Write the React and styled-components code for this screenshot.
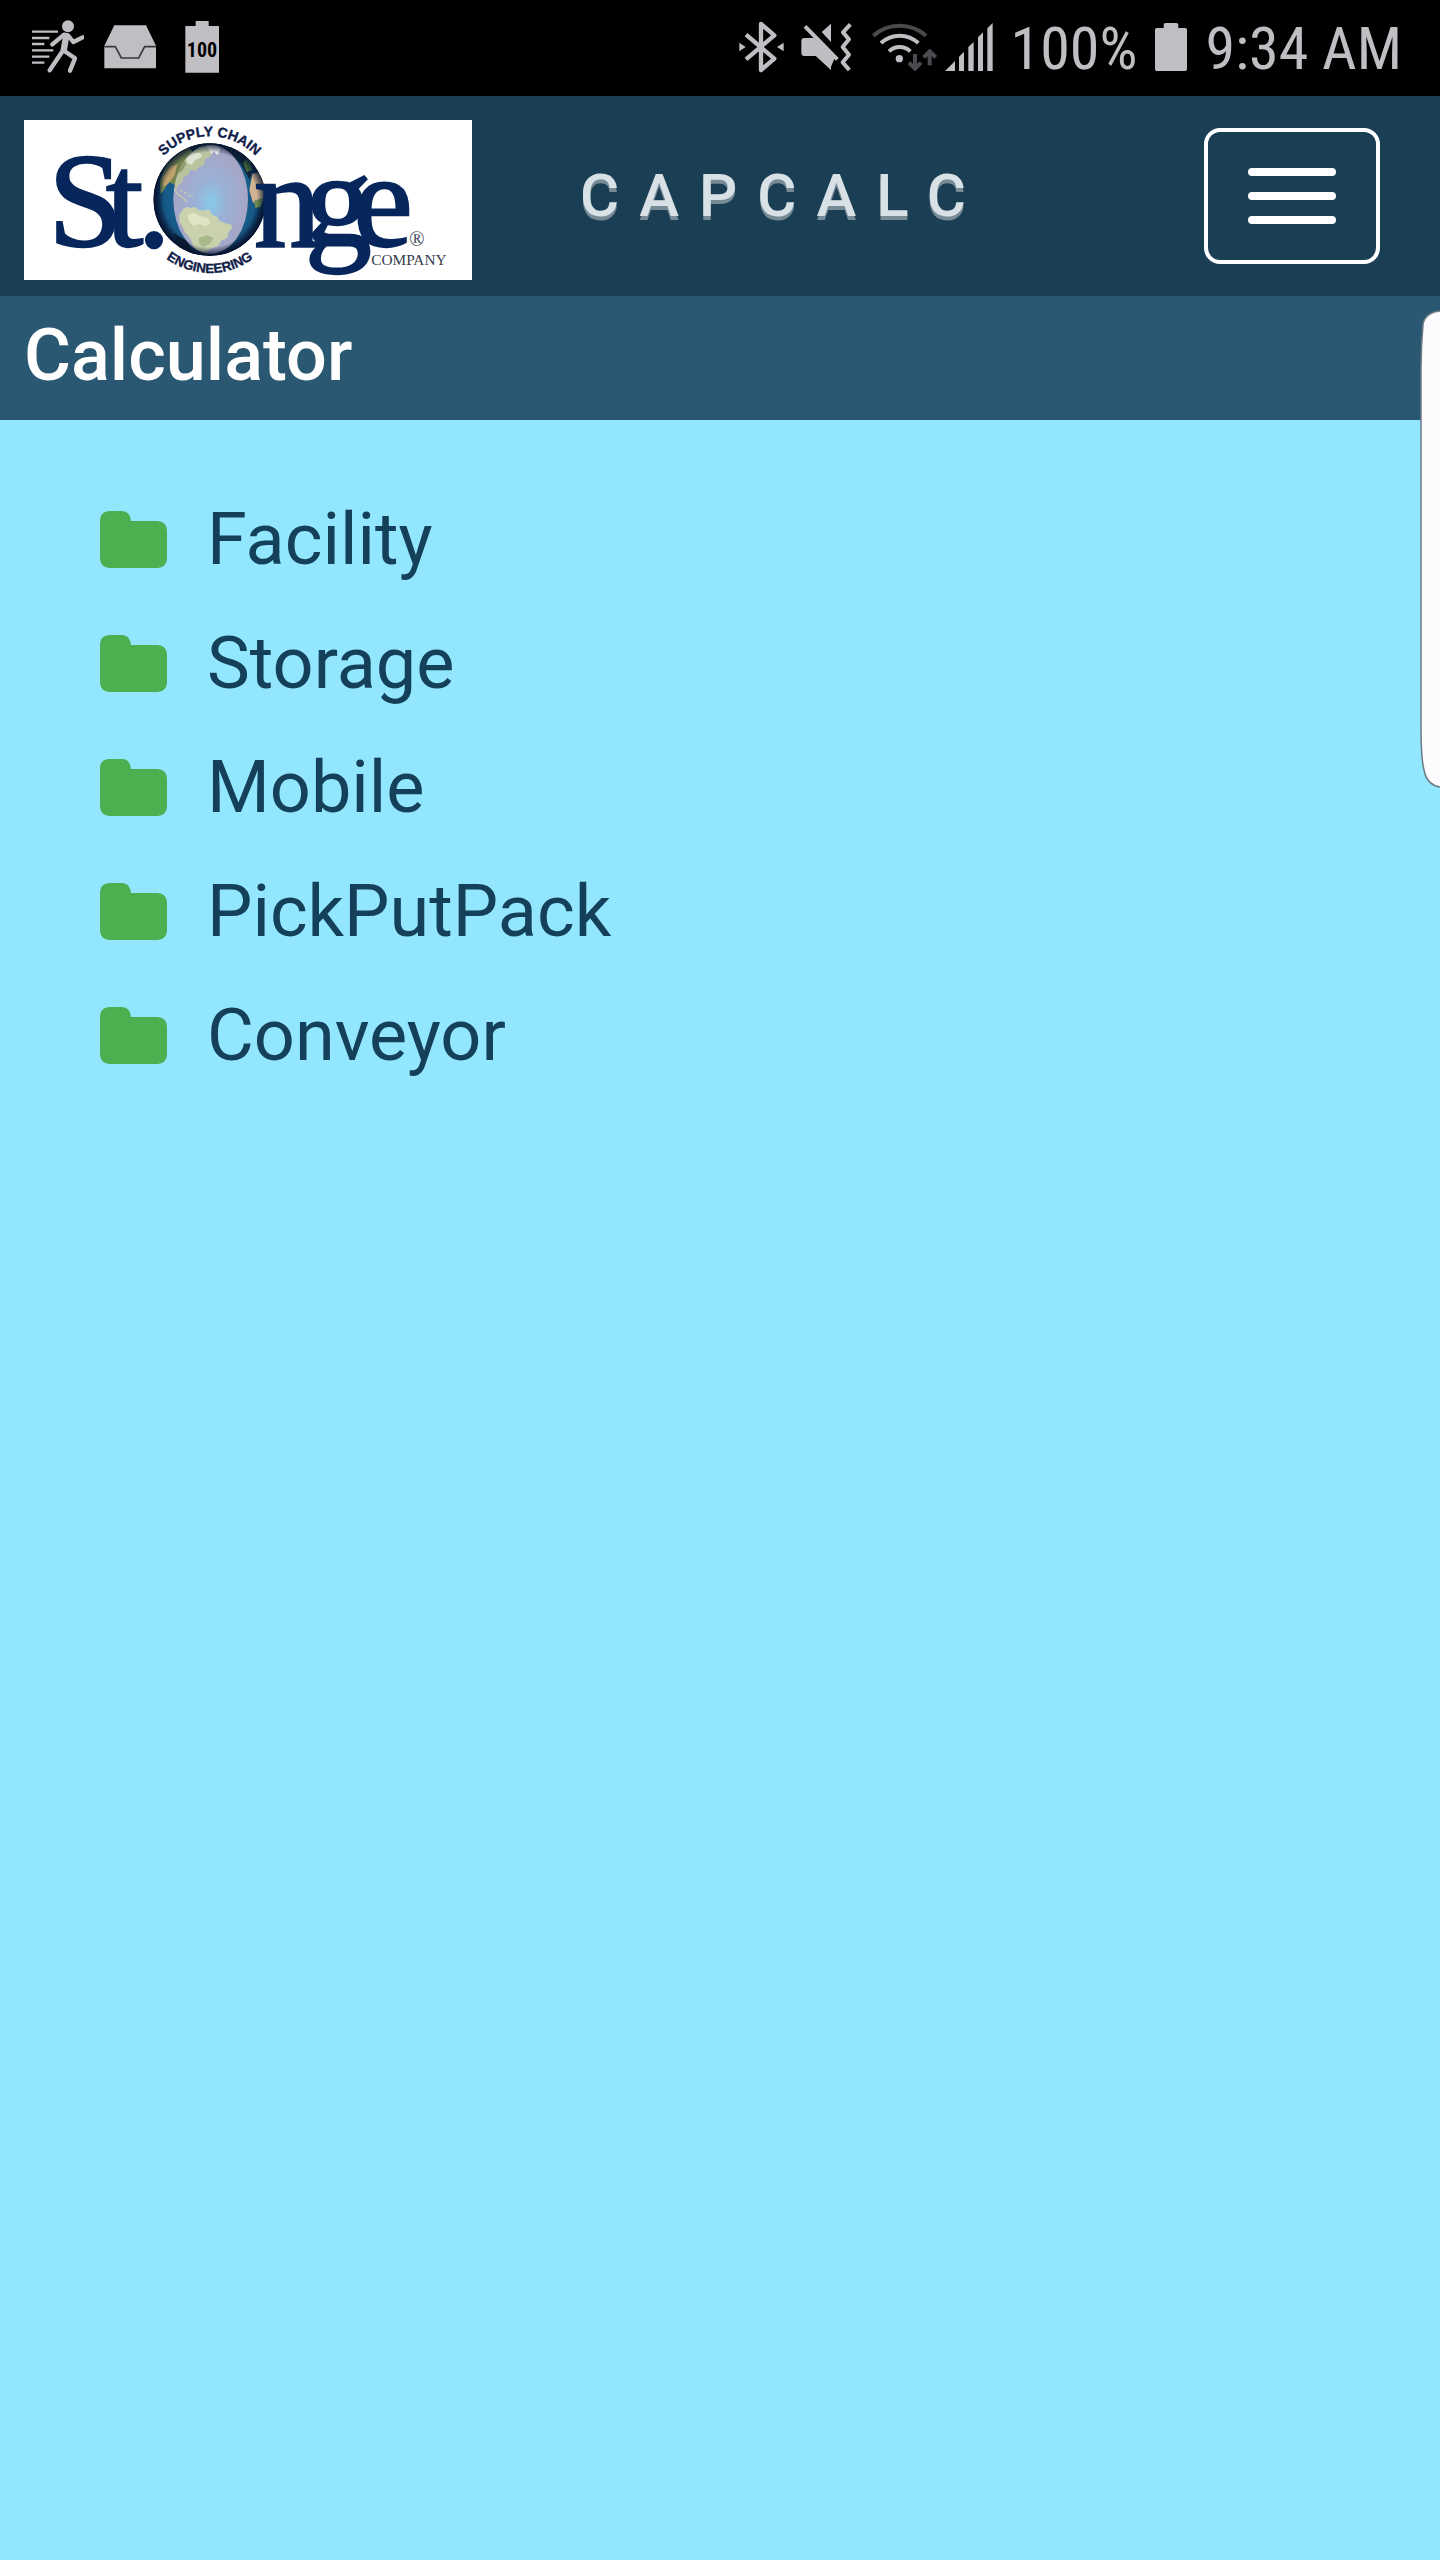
import React from 'react';
import styled, { createGlobalStyle } from 'styled-components';

const folders = ['Facility', 'Storage', 'Mobile', 'PickPutPack', 'Conveyor'];

function App() {
  return (
    <Page>
      <GlobalStyle />
      <StatusBar>
        <StatusGroup $gap={20}>
          <RunnerIcon />
          <InboxIcon />
          <FullBatteryIcon />
        </StatusGroup>
        <StatusGroup $gap={8}>
          <BluetoothIcon />
          <MuteIcon />
          <WifiIcon />
          <SignalIcon />
          <StatusText>100%</StatusText>
          <BatteryIcon />
          <StatusText>9:34 AM</StatusText>
        </StatusGroup>
      </StatusBar>
      <Header>
        <Logo />
        <Brand>CAPCALC</Brand>
        <MenuButton type="button" aria-label="Menu">
          <MenuBar />
          <MenuBar />
          <MenuBar />
        </MenuButton>
      </Header>
      <TitleBar>
        <h2>Calculator</h2>
      </TitleBar>
      <FolderList>
        {folders.map(name => (
          <li key={name}>
            <FolderButton type="button">
              <FolderIcon />
              {name}
            </FolderButton>
          </li>
        ))}
      </FolderList>
      <EdgeHandle />
    </Page>
  );
}

export default App;

function RunnerIcon() {
  return (
    <StatusIcon $width={52} viewBox="96 0 156 288">
      <g fill="none" stroke="#c0bec3" strokeWidth="7">
        <path d="M96 95H174M96 114H148M96 132H133M96 151H160M96 170H148M96 188H133" />
        <g strokeWidth="13" strokeLinecap="round" strokeLinejoin="round">
          <path d="M157 133L192 104L204 106L220 126L248 112" />
          <path d="M190 150L149 211M192 152L225 175L210 212" />
        </g>
        <path d="M199 106L191 152" strokeWidth="19" />
      </g>
      <circle cx="204" cy="79" r="18" fill="#c0bec3" />
    </StatusIcon>
  );
}

function InboxIcon() {
  return (
    <StatusIcon $width={52} viewBox="312 0 156 288">
      <path fill="#c0bec3" d="M343 76H438L468 137V205H313V137Z" />
      <path
        fill="none"
        stroke="#3a393c"
        strokeWidth="5"
        d="M313 140H346L364 174H416L434 140H468"
      />
    </StatusIcon>
  );
}

function FullBatteryIcon() {
  return (
    <StatusIcon $width={52} viewBox="529 0 156 288">
      <path fill="#c0bec3" d="M588 63H627V78H658V218H557V78H588Z" />
      <text
        x="607"
        y="170"
        textAnchor="middle"
        fontFamily="'Roboto Condensed', Roboto, sans-serif"
        fontWeight="700"
        fontSize="60"
        fill="#000"
      >
        100
      </text>
    </StatusIcon>
  );
}

function BluetoothIcon() {
  return (
    <StatusIcon $width={54} viewBox="60 0 162 288">
      <path
        fill="none"
        stroke="#c0bec3"
        strokeWidth="13"
        strokeLinejoin="round"
        d="M81 104L166 176L126 210V72L166 106L81 178"
      />
      <path fill="#c0bec3" d="M61 128L80 141L61 154ZM194 128L174 141L194 154Z" />
    </StatusIcon>
  );
}

function MuteIcon() {
  return (
    <StatusIcon $width={63} viewBox="246 0 189 288">
      <path fill="#c0bec3" d="M256 114H284L336 163V210L290 168H256Q247 168 247 159V123Q247 114 256 114Z" />
      <path fill="#c0bec3" d="M336 71V126L308 96Z" />
      <path fill="none" stroke="#c0bec3" strokeWidth="12" d="M258 79L355 178" />
      <path fill="#c0bec3" d="M284 114L347 174L336 200L276 150Z" />
      <path
        fill="none"
        stroke="#c0bec3"
        strokeWidth="12"
        strokeLinejoin="round"
        d="M394 73L372 97L390 118L371 141L390 164L371 187L391 210"
      />
    </StatusIcon>
  );
}

function WifiIcon() {
  return (
    <StatusIcon $width={65} viewBox="459 0 195 288">
      <g fill="none" strokeWidth="12">
        <path stroke="#4c4a4e" d="M463 107A119 119 0 0 1 621 107" />
        <path stroke="#c0bec3" d="M486 129A82 82 0 0 1 598 129" />
        <path stroke="#c0bec3" d="M510 154A46 46 0 0 1 574 154" />
        <path stroke="#4c4a4e" d="M588 162V206M570 188L588 206L606 188" />
        <path stroke="#4c4a4e" d="M632 196V154M614 172L632 154L650 172" />
      </g>
      <circle cx="541" cy="176" r="11" fill="#c0bec3" />
    </StatusIcon>
  );
}

function SignalIcon() {
  return (
    <StatusIcon $width={48} viewBox="678 0 144 288">
      <path
        fill="#c0bec3"
        d="M678 213L708 183V213ZM720 170L735 155V213H720ZM748 141L764 126V213H748ZM777 112L792 97V213H777ZM805 85L821 69V213H805Z"
      />
    </StatusIcon>
  );
}

function BatteryIcon() {
  return (
    <StatusIcon $width={32} viewBox="468 0 96 288">
      <path
        fill="#c0bec3"
        d="M500 69H532Q538 69 538 75V84H559Q564 84 564 89V208Q564 213 559 213H473Q468 213 468 208V89Q468 84 473 84H494V75Q494 69 500 69Z"
      />
    </StatusIcon>
  );
}

function FolderIcon() {
  return (
    <FolderShape viewBox="0 0 67 57" aria-hidden="true">
      <path
        fill="#4caf50"
        d="M9 0H22Q30 0 31 10H58Q67 11 67 20V47Q67 56 58 57H9Q0 56 0 47V9Q0 1 9 0Z"
      />
    </FolderShape>
  );
}

function EdgeHandle() {
  return (
    <Handle width="20" height="480" viewBox="0 0 20 480" aria-hidden="true">
      <path
        fill="#fcfbfd"
        stroke="#6f7b82"
        strokeWidth="1.5"
        d="M22 1C12 1 4 6 3 15C2 26 1 40 1 60V418C1 438 2 452 4 460C6 471 13 477 22 477Z"
      />
    </Handle>
  );
}

function Logo() {
  return (
    <LogoBox viewBox="72 90 1344 480" role="img" aria-label="St. Onge Company">
      <defs>
        <radialGradient id="ocean">
          <stop offset="0" stopColor="#1e6c9c" />
          <stop offset="0.8" stopColor="#175a88" />
          <stop offset="1" stopColor="#07183a" />
        </radialGradient>
        <radialGradient id="lens" cx="0.5" cy="0.52" r="0.52">
          <stop offset="0" stopColor="#86cbe8" />
          <stop offset="0.35" stopColor="#9ab2d8" />
          <stop offset="1" stopColor="#a9a3c2" />
        </radialGradient>
        <radialGradient id="rim">
          <stop offset="0.84" stopColor="#061530" stopOpacity="0" />
          <stop offset="1" stopColor="#061530" stopOpacity="0.9" />
        </radialGradient>
        <clipPath id="globe">
          <circle cx="629" cy="329" r="169" />
        </clipPath>
        <clipPath id="lensClip">
          <ellipse cx="632" cy="328" rx="112" ry="163" />
        </clipPath>
        <path id="arcTop" d="M439 329A190 190 0 0 1 819 329" />
        <path id="arcBottom" d="M409 329A220 220 0 0 0 849 329" />
      </defs>
      <rect x="72" y="90" width="1344" height="480" fill="#fff" />

      <g clipPath="url(#globe)">
        <circle cx="629" cy="329" r="169" fill="url(#ocean)" />
        <path fill="#74854f" d="M480 270L500 220L545 180L600 160L640 160L600 190L560 240L535 270L524 284L506 276L492 300L482 312Z" />
        <path fill="#c0a26c" d="M488 262L510 232L532 222L524 256L504 282L490 290Z" />
        <path fill="#10253a" d="M560 160L690 158L760 215L750 270L722 222L690 190L640 178L580 190Z" />
        <path fill="#3f6c3c" d="M735 205L752 215L757 240L740 246L730 222Z" />
        <path fill="#d2b391" d="M757 252L780 246L800 280L798 318L776 350L758 336L748 300Z" />
        <path fill="#6d8a54" d="M762 332L792 322L782 350L766 354Z" />
        <path fill="#0b1c30" d="M520 430L560 452L585 496L540 480Z" />
        <g clipPath="url(#lensClip)">
          <rect x="515" y="160" width="235" height="340" fill="url(#lens)" />
          <path
            fill="#b9c49f"
            d="M520 280L524 230L560 190L606 166L640 176L632 198L616 208L612 226L596 232L588 242L572 240L562 256L550 262L548 276L536 284L530 298Z"
          />
          <path fill="#e8eae8" d="M618 166L650 160L662 176L652 196L642 184L634 192Z" />
          <path fill="#dfe3d4" d="M560 204L578 190L600 188L606 200L586 210L576 224L562 220Z" />
          <path fill="#8d9c68" d="M538 226L552 206L558 222L546 244L534 250Z" />
          <path fill="none" stroke="#c3cbb4" strokeWidth="4" d="M522 294L532 312L548 322L560 336" />
          <path fill="none" stroke="#c3cbb4" strokeWidth="4" strokeDasharray="10 5" d="M538 300L556 308L578 324" />
          <path
            fill="#c9d2ac"
            d="M538 374L550 356L562 350L572 354L584 350L596 360L612 362L626 358L636 374L652 380L658 392L676 400L694 404L696 414L686 426L682 444L664 452L654 468L636 474L622 484L606 490L592 486L580 470L572 446L556 428L546 408L538 396Z"
          />
          <path fill="#dfe4c4" d="M562 376L580 368L600 378L622 384L632 398L618 408L596 402L582 408L568 396Z" />
          <path fill="#a9ba8a" d="M596 444L620 436L640 444L630 462L610 472L598 462Z" />
        </g>
        <circle cx="629" cy="329" r="169" fill="url(#rim)" />
      </g>

      <g fontFamily="'Liberation Serif', serif" fontSize="402" fill="#06265c" stroke="#06265c" strokeWidth="7">
        <text y="467">
          <tspan x="145">S</tspan>
          <tspan x="318">t</tspan>
          <tspan x="412">.</tspan>
          <tspan x="762">n</tspan>
          <tspan x="914">g</tspan>
          <tspan x="1060">e</tspan>
        </text>
      </g>
      <g fontFamily="'Liberation Serif', serif" fill="#353c50">
        <text x="1228" y="468" fontSize="60">®</text>
        <text x="1114" y="526" fontSize="46">COMPANY</text>
      </g>
      <g fontFamily="'Liberation Sans', sans-serif" fontWeight="700" fill="#10204a" stroke="#10204a" textAnchor="middle">
        <text fontSize="42">
          <textPath href="#arcTop" startOffset="50%">SUPPLY CHAIN</textPath>
        </text>
        <text fontSize="40">
          <textPath href="#arcBottom" startOffset="50%">ENGINEERING</textPath>
        </text>
      </g>
    </LogoBox>
  );
}

const GlobalStyle = createGlobalStyle`
  body {
    margin: 0;
    background: #92e7ff;
    font-family: Roboto, sans-serif;
  }
`;

const Page = styled.div`
  position: relative;
  min-height: 100vh;
  background: #92e7ff;
  overflow: hidden;
`;

const StatusBar = styled.div`
  display: flex;
  justify-content: space-between;
  height: 96px;
  padding: 0 28px 0 32px;
  background: #000;
`;

const StatusGroup = styled.div`
  display: flex;
  align-items: center;
  gap: ${({ $gap }) => $gap}px;
`;

const StatusIcon = styled.svg`
  flex: none;
  width: ${({ $width }) => $width}px;
  height: 96px;
`;

const StatusText = styled.span`
  padding: 2px 10px 0;
  color: #c0bec3;
  font-family: 'Roboto Condensed', Roboto, sans-serif;
  font-size: 60px;
  line-height: 72px;
  white-space: nowrap;
`;

const Header = styled.header`
  display: flex;
  align-items: center;
  padding: 16px 60px 16px 24px;
  background: #1a3e53;
`;

const LogoBox = styled.svg`
  flex: none;
  width: 448px;
  height: 160px;
  margin-top: 8px;
`;

const Brand = styled.h1`
  margin: 0 auto 0 108px;
  color: #d8e1e5;
  font-size: 60px;
  font-weight: 500;
  line-height: 72px;
  letter-spacing: 20px;
  text-shadow: 0 4px 0 #768b95;
`;

const MenuButton = styled.button`
  display: flex;
  flex-direction: column;
  align-items: center;
  justify-content: center;
  gap: 16px;
  width: 176px;
  height: 136px;
  padding: 0;
  background: none;
  border: 4px solid #fff;
  border-radius: 16px;
  cursor: pointer;
`;

const MenuBar = styled.span`
  width: 88px;
  height: 8px;
  background: #fff;
  border-radius: 4px;
`;

const TitleBar = styled.div`
  padding: 17px 24px 21px;
  background: #2a5771;

  & h2 {
    margin: 0;
    color: #fff;
    font-size: 72px;
    font-weight: 500;
    line-height: 86px;
  }
`;

const FolderList = styled.ul`
  margin: 0;
  padding: 58px 100px;
  list-style: none;
`;

const FolderButton = styled.button`
  display: flex;
  align-items: center;
  gap: 40px;
  padding: 0;
  background: none;
  border: none;
  color: #154059;
  font-family: inherit;
  font-size: 72px;
  line-height: 124px;
  cursor: pointer;
`;

const FolderShape = styled.svg`
  width: 67px;
  height: 57px;
  margin-bottom: 2px;
`;

const Handle = styled.svg`
  position: absolute;
  top: 310px;
  right: 0;
`;
